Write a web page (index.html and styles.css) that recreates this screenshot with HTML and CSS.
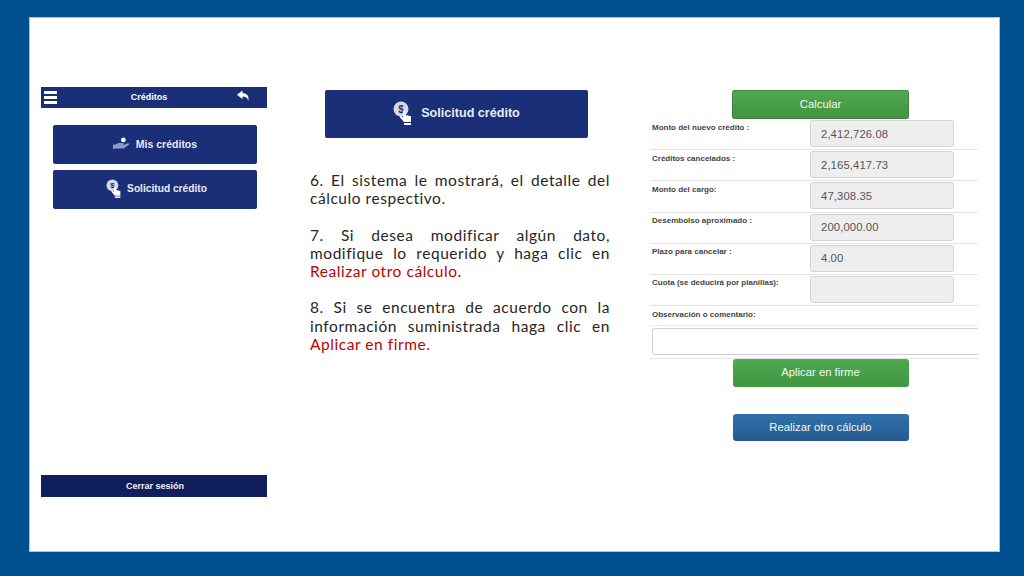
FILE: index.html
```html
<!DOCTYPE html>
<html lang="es">
<head>
<meta charset="utf-8">
<title>Solicitud crédito</title>
<link rel="stylesheet" href="styles.css">
</head>
<body>
<main class="slide">
  <section class="phone">
    <header class="phone-bar">
      <span class="burger"><i></i><i></i><i></i></span>
      <span class="phone-title">Créditos</span>
      <svg class="back" viewBox="0 0 14 13"><path d="M6 0 0 4.700 6 9.400V6.400c3.200 0 5.200 1.200 6.200 4.600 1.200-5.200-1.600-8-6.200-8z" fill="#fff"/></svg>
    </header>
    <div class="menu">
      <a class="menu-btn">
        <svg class="ico-hand" viewBox="0 0 20 14"><circle cx="11.500" cy="3" r="2.600" fill="#fff"/><path d="M0 8h3l3-1.500h5c1.200 0 1.200 2 0 2H8.500h3.500l4-1.500c2-.6 3 .6 1.500 1.500L12 12.500H3L0 13z" fill="#8d9ac4"/></svg>
        <span>Mis créditos</span>
      </a>
      <a class="menu-btn">
        <svg class="ico-coin" viewBox="0 0 20 24"><circle cx="8" cy="8" r="7.500" fill="#d5d9e8"/><text x="8" y="11.500" class="dollar">$</text><path d="M10 10.500c0-1.400 2.400-1.400 2.400 0V14l5.600 1.200V21H11l-4-4.500c-.8-1.200.6-2 1.600-1.200l1.400 1.200z" fill="#fff"/><rect x="11" y="22" width="7" height="2" fill="#fff"/></svg>
        <span>Solicitud crédito</span>
      </a>
    </div>
    <footer class="logout">Cerrar sesión</footer>
  </section>

  <section class="steps">
    <a class="big-btn">
      <svg class="ico-coin-big" viewBox="0 0 20 24"><circle cx="8" cy="8" r="7.500" fill="#d5d9e8"/><text x="8" y="11.500" class="dollar">$</text><path d="M10 10.500c0-1.400 2.400-1.400 2.400 0V14l5.600 1.200V21H11l-4-4.500c-.8-1.200.6-2 1.600-1.200l1.400 1.200z" fill="#fff"/><rect x="11" y="22" width="7" height="2" fill="#fff"/></svg>
      <span>Solicitud crédito</span>
    </a>
    <div class="copy">
      <p>6. El sistema le mostrará, el detalle del cálculo respectivo.</p>
      <p>7. Si desea modificar algún dato, modifique lo requerido y haga clic en <em>Realizar otro cálculo</em>.</p>
      <p>8. Si se encuentra de acuerdo con la información suministrada haga clic en <em>Aplicar en firme.</em></p>
    </div>
  </section>

  <section class="form">
    <div class="action action-green action-focus">Calcular</div>
    <div class="row"><label>Monto del nuevo crédito :</label><div class="field">2,412,726.08</div></div>
    <div class="row"><label>Créditos cancelados :</label><div class="field">2,165,417.73</div></div>
    <div class="row"><label>Monto del cargo:</label><div class="field">47,308.35</div></div>
    <div class="row"><label>Desembolso aproximado :</label><div class="field">200,000.00</div></div>
    <div class="row"><label>Plazo para cancelar :</label><div class="field">4.00</div></div>
    <div class="row"><label>Cuota (se deducirá por planillas):</label><div class="field"></div></div>
    <div class="row row-note"><label>Observación o comentario:</label></div>
    <div class="row-area"><div class="area"></div></div>
    <div class="action action-green action-apply">Aplicar en firme</div>
    <div class="action action-blue">Realizar otro cálculo</div>
  </section>
</main>
</body>
</html>
```

FILE: styles.css
```css
* { box-sizing: border-box; }
html, body { margin: 0; height: 576px; overflow: hidden; }
body {
  background: #00508f;
  padding: 17px 24px 24px 29px;
  font-family: "Liberation Sans", Arial, sans-serif;
}
.slide {
  height: 535px;
  background: #fff;
  box-shadow: inset 0 0 0 1px #a9c6dc;
  display: flex;
  align-items: flex-start;
  padding: 70px 0 0 12px;
  overflow: hidden;
}

/* Left: phone menu */
.phone {
  width: 226px;
  height: 410px;
  display: flex;
  flex-direction: column;
  flex: none;
}
.phone-bar {
  height: 21px;
  background: #1a2f78;
  display: flex;
  align-items: center;
  color: #fff;
  padding: 0 17px 0 3px;
}
.burger {
  width: 13px;
  display: flex;
  flex-direction: column;
  gap: 2.500px;
}
.burger i { display: block; height: 2.500px; background: #fff; }
.phone-title {
  flex: 1;
  text-align: center;
  font-size: 9px;
  font-weight: bold;
  padding: 0 0 2px 4px;
}
.back { width: 13px; height: 13px; margin-top: -3px; }
.menu {
  display: flex;
  flex-direction: column;
  gap: 6px;
  padding: 17px 10px 0 12px;
}
.menu-btn {
  height: 39px;
  background: #1a2f78;
  border-radius: 2px;
  color: #e9ebf4;
  font-size: 10.500px;
  font-weight: bold;
  display: flex;
  align-items: center;
  justify-content: center;
  gap: 5px;
  padding-bottom: 2px;
}
.ico-hand { width: 18px; height: 13px; }
.ico-coin { width: 16px; height: 19px; margin-left: 3px; }
.menu-btn + .menu-btn { font-size: 10.200px; padding-bottom: 3px; }
.dollar { font-size: 10px; fill: #1a2f78; text-anchor: middle; font-family: "Liberation Sans", sans-serif; }
.logout {
  margin-top: auto;
  height: 22px;
  background: #101f5c;
  color: #f0f1f7;
  font-size: 9px;
  font-weight: bold;
  display: flex;
  align-items: center;
  justify-content: center;
  padding-left: 2px;
}

/* Middle: steps */
.steps {
  width: 300px;
  margin-left: 43px;
  flex: none;
  padding-top: 3px;
}
.big-btn {
  width: 263px;
  height: 48px;
  margin-left: 15px;
  background: #1a2f78;
  border-radius: 2px;
  color: #e9ebf4;
  font-size: 12.600px;
  font-weight: bold;
  display: flex;
  align-items: center;
  justify-content: center;
  gap: 8px;
  padding-bottom: 3px;
}
.ico-coin-big { width: 20px; height: 24px; }
.copy {
  margin-top: 33px;
  font-family: Lato, "Open Sans", sans-serif;
  font-size: 15.500px;
  line-height: 18.300px;
  letter-spacing: .55px;
  color: #262626;
  text-align: justify;
}
.copy p { margin: 0 0 18px; }
.copy em { font-style: normal; color: #c00000; }

/* Right: form */
.form {
  width: 328px;
  margin-left: 40px;
  flex: none;
  padding-top: 3px;
  overflow: hidden;
}
.action {
  width: 176px;
  margin-left: 82.500px;
  color: #f4f8f4;
  font-size: 11.300px;
  display: flex;
  align-items: center;
  justify-content: center;
  border-radius: 3px;
  padding-bottom: 2px;
}
.action-green { background: linear-gradient(#50a850, #3f963f); }
.action-focus { height: 29px; margin-left: 82px; width: 177px; outline: 1px dotted #3a6a3a; outline-offset: -1px; }
.action-apply { height: 28px; }
.action-blue { height: 27px; margin-top: 27px; padding-bottom: 0; background: linear-gradient(#3272ab, #245a8f); }
.row {
  height: 31.200px;
  border-bottom: 1px solid #e4e4e4;
  display: flex;
  align-items: flex-start;
  justify-content: space-between;
  padding: 1px 24px 0 2px;
}
.row label {
  font-size: 8px;
  font-weight: bold;
  color: #444;
  padding-top: 2.500px;
}
.field {
  width: 144px;
  height: 27px;
  background: #eee;
  border: 1px solid #d4d4d4;
  border-radius: 3px;
  color: #555;
  font-size: 11.300px;
  letter-spacing: .1px;
  padding: 0 10px;
  display: flex;
  align-items: center;
}
.row-note { height: 19.800px; border-bottom: 1px solid #eaeaea; padding-top: 0; }
.row-note label { padding-top: 4px; }
.row-area { height: 33px; padding: 2.500px 0 0 2px; border-bottom: 1px solid #e4e4e4; }
.area {
  width: 340px;
  height: 27px;
  background: #fff;
  border: 1px solid #d0d0d0;
  border-radius: 3px;
}
```
